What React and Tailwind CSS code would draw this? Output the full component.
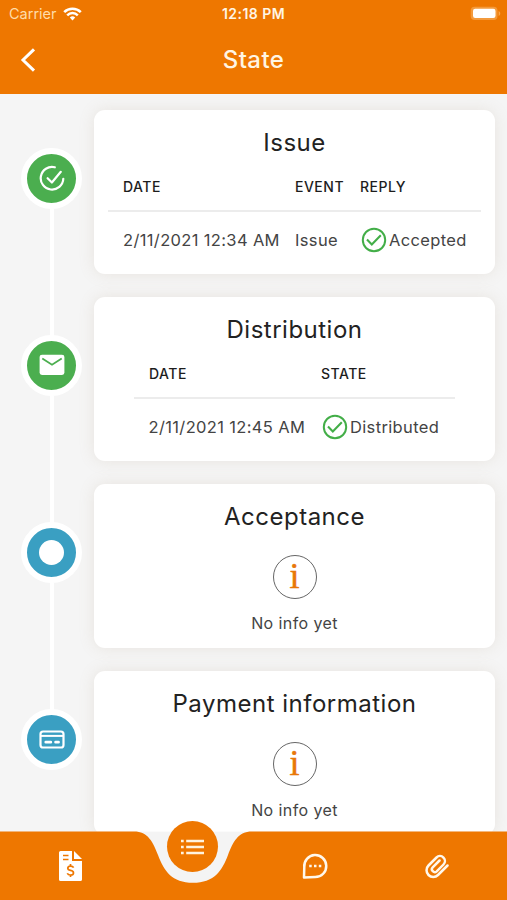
const TableHead = ({ columns }) => (
  <div className="flex h-[50px] items-center border-b-2 border-[#ececec] pl-[15px] text-[14px] font-medium tracking-[0.5px] text-[#1d1d1d]">
    {columns.map((col) => (
      <div key={col.label} className={col.width}>{col.label}</div>
    ))}
  </div>
);

const StatusCheck = () => (
  <svg viewBox="0 0 26 26" className="mr-[2px] h-[26px] w-[26px] shrink-0" fill="none" stroke="#43ae48">
    <circle cx="13" cy="13" r="11.2" strokeWidth="2" />
    <path d="M6 12.6l4.8 4.8 9-9.2" strokeWidth="2.1" />
  </svg>
);

const NoInfo = () => (
  <div className="flex flex-col items-center pt-[18.5px]">
    <div className="flex h-[44px] w-[44px] items-center justify-center rounded-full border-[1.5px] border-[#666] font-['Liberation_Serif',serif] text-[36px] leading-none text-[#e87708] [-webkit-text-stroke:0.5px_#e87708]">
      <span className="-mt-px">i</span>
    </div>
    <p className="mt-[12.5px] text-[16px] leading-6 tracking-[0.4px] text-[#444]">No info yet</p>
  </div>
);

const CheckIcon = () => (
  <svg viewBox="0 0 26 26" className="h-[26px] w-[26px]" fill="none" stroke="white" strokeWidth="2.2" strokeLinecap="round" strokeLinejoin="round">
    <path d="M15.8 2.3A11.3 11.3 0 1 0 24.3 13.8" />
    <path d="M8.6 13.2l4.3 4.3L21.8 6.8" />
  </svg>
);

const MailIcon = () => (
  <svg viewBox="0 0 26 22" className="h-[22px] w-[26px]">
    <rect x="0.6" y="0.7" width="24.8" height="20.3" rx="2.4" fill="white" />
    <path d="M3.3 4.6l9.7 6.2 9.7-6.2" fill="none" stroke="#4bae4f" strokeWidth="1.8" />
  </svg>
);

const CardIcon = () => (
  <svg viewBox="0 0 26 20" className="h-[20px] w-[26px]" fill="none" stroke="white">
    <rect x="1.5" y="2.5" width="23" height="16" rx="2.6" strokeWidth="2.2" />
    <path d="M2 6.9h22" strokeWidth="2" />
    <path d="M6.8 13.2h5M16.6 13.2h2.9" strokeWidth="2.8" strokeLinecap="round" />
  </svg>
);

const STEPS = [
  {
    title: 'Issue',
    color: 'bg-[#4bae4f]',
    icon: <CheckIcon />,
    body: (
      <div className="mx-[14px]">
        <TableHead
          columns={[
            { label: 'DATE', width: 'w-[172px]' },
            { label: 'EVENT', width: 'w-[65px]' },
            { label: 'REPLY', width: 'w-[80px]' },
          ]}
        />
        <div className="flex h-[56px] items-center pl-[15px] text-[16.5px] tracking-[0.35px] text-[#444]">
          <div className="w-[172px] whitespace-nowrap">2/11/2021 12:34 AM</div>
          <div className="w-[66px]">Issue</div>
          <div className="flex items-center"><StatusCheck />Accepted</div>
        </div>
      </div>
    ),
  },
  {
    title: 'Distribution',
    color: 'bg-[#4bae4f]',
    icon: <MailIcon />,
    body: (
      <div className="mx-[40px]">
        <TableHead
          columns={[
            { label: 'DATE', width: 'w-[172px]' },
            { label: 'STATE', width: 'w-[80px]' },
          ]}
        />
        <div className="flex h-[56px] items-center pl-[14.5px] text-[16.5px] tracking-[0.35px] text-[#444]">
          <div className="w-[173.5px] whitespace-nowrap">2/11/2021 12:45 AM</div>
          <div className="flex items-center"><StatusCheck />Distributed</div>
        </div>
      </div>
    ),
  },
  {
    title: 'Acceptance',
    color: 'bg-[#3a9fc2]',
    icon: <div className="h-[25px] w-[25px] rounded-full bg-white" />,
    body: <NoInfo />,
  },
  {
    title: 'Payment information',
    color: 'bg-[#3a9fc2]',
    icon: <CardIcon />,
    body: <NoInfo />,
  },
];

const Step = ({ step, last }) => (
  <div className="flex h-[187px]">
    <div className="flex w-[94px] shrink-0 flex-col items-start pl-[21px] pt-[37.5px]">
      <div className={`z-10 flex h-[61px] w-[61px] shrink-0 items-center justify-center rounded-full border-[6px] border-white ${step.color}`}>
        {step.icon}
      </div>
      {!last && <div className="ml-[28.5px] h-[128px] w-1 shrink-0 bg-white" />}
    </div>
    <div className="h-[164px] w-[401px] rounded-[11px] bg-white shadow-[0_0_16px_rgba(170,145,110,0.16)]">
      <h2 className="h-[52px] pt-[17px] text-center text-[24px] leading-8 tracking-[0.5px] text-[#222]">{step.title}</h2>
      {step.body}
    </div>
  </div>
);

const Header = () => (
  <header className="z-20 h-[94px] shrink-0 bg-[#ee7700] text-[#fff5e4]">
    <div className="grid h-[27px] grid-cols-3 items-center pl-[9px] pr-[6px]">
      <div className="flex items-center gap-[6px] text-[14.5px] text-[#ffdca8]">
        Carrier
        <svg viewBox="0 0 19 14" className="h-[14px] w-[19px]" fill="none" stroke="white" strokeWidth="2.5">
          <path d="M1.2 5.1a11.8 11.8 0 0 1 16.6 0" />
          <path d="M4.2 8.3a7.5 7.5 0 0 1 10.6 0" />
          <path d="M9.5 13.4l-2.7-2.8a3.8 3.8 0 0 1 5.4 0z" fill="white" stroke="none" />
        </svg>
      </div>
      <div className="-ml-[3px] text-center text-[14px] font-semibold tracking-[0.45px]">12:18 PM</div>
      <svg viewBox="0 0 31 15" className="h-[15px] w-[31px] justify-self-end">
        <rect x="0.7" y="0.8" width="26.8" height="13.2" rx="4" fill="#f39a3c" />
        <rect x="3" y="2.8" width="22.5" height="9.2" rx="2.2" fill="white" />
        <path d="M28.6 5v5c2.2-.8 2.2-4.2 0-5z" fill="#f7a64c" />
      </svg>
    </div>
    <div className="grid h-[66px] grid-cols-3 items-center">
      <svg viewBox="0 0 16 26" className="ml-5 h-[26px] w-[16px]" fill="none" stroke="white" strokeWidth="3">
        <path d="M14 2.3L3 13l11 10.7" />
      </svg>
      <h1 className="text-center text-[24px] font-medium tracking-[0.4px]">State</h1>
    </div>
  </header>
);

const NavBar = () => (
  <nav className="absolute inset-x-0 bottom-0 z-20 h-[69px]">
    {/* bar with the dip around the active tab */}
    <svg viewBox="0 0 507 69" className="absolute inset-0 h-[69px] w-[507px]">
      <rect y="0.6" width="507" height="69" fill="#f4f4f4" />
      <path
        d="M0 .5H134C148 .5 153 11 158 24C164 40 172 51.8 193 51.8S222 40 228 24C233 11 238 .5 252 .5H507V69H0Z"
        fill="#ee7700"
      />
    </svg>
    <div className="relative grid h-[69px] grid-cols-4 items-center justify-items-center px-[9px]">
      <svg viewBox="0 0 23 30" className="h-[30px] w-[23px]">
        <path d="M1.6 0H13v10h10v18.4q0 1.6-1.6 1.6H1.6Q0 30 0 28.4V1.6Q0 0 1.6 0z" fill="white" />
        <path d="M15 0l8 8h-8z" fill="white" />
        <path d="M4 4.6h5.5M4 8.6h5.5" stroke="#ee7700" strokeWidth="1.5" />
        <path d="M14.6 16.6q-.8-1.5-3.1-1.5-2.7 0-2.7 2.1 0 1.7 2.7 2.2 3 .5 3 2.5t-3 2.1q-2.5 0-3.2-1.7M11.5 13v2M11.5 24v2" fill="none" stroke="#ee7700" strokeWidth="1.7" />
      </svg>
      <div className="relative -top-[19.5px] flex h-[51px] w-[51px] items-center justify-center rounded-full bg-[#ee7700]">
        <svg viewBox="0 0 23 18" className="mt-[2px] h-[18px] w-[23px]" stroke="#fff3df" strokeWidth="2.5">
          <path d="M0 3h2.7M5.2 3H23M0 9h2.7M5.2 9H23M0 15h2.7M5.2 15H23" />
        </svg>
      </div>
      <svg viewBox="0 0 26 26" className="mt-px h-[26px] w-[26px]" fill="none" stroke="#fff8ec" strokeWidth="2.5">
        <path d="M2 24.4L2.3 14A11 11 0 1 1 13.3 24.1Z" strokeLinejoin="round" />
        <path d="M7.2 13h2.5M12 13h2.5M16.8 13h2.5" />
      </svg>
      <svg viewBox="0 0 24 26" className="h-[26px] w-[24px]" fill="none" stroke="#fff8ec" strokeWidth="2.5" strokeLinecap="round">
        <path d="M22.5 12.5L13 22A6.7 6.7 0 0 1 3.5 12.5L11.5 4.5A4.95 4.95 0 0 1 18.5 11.5L11.7 18.3A2.83 2.83 0 0 1 7.7 14.3L14.5 7.5" />
      </svg>
    </div>
  </nav>
);

const App = () => {
  return (
    <div className="relative flex h-[900px] w-[507px] flex-col overflow-hidden bg-[#f5f5f5] font-['Inter',sans-serif]">
      <Header />
      <main className="pt-4">
        {STEPS.map((step, i) => (
          <Step key={step.title} step={step} last={i === STEPS.length - 1} />
        ))}
      </main>
      <NavBar />
    </div>
  );
};

export default App;
